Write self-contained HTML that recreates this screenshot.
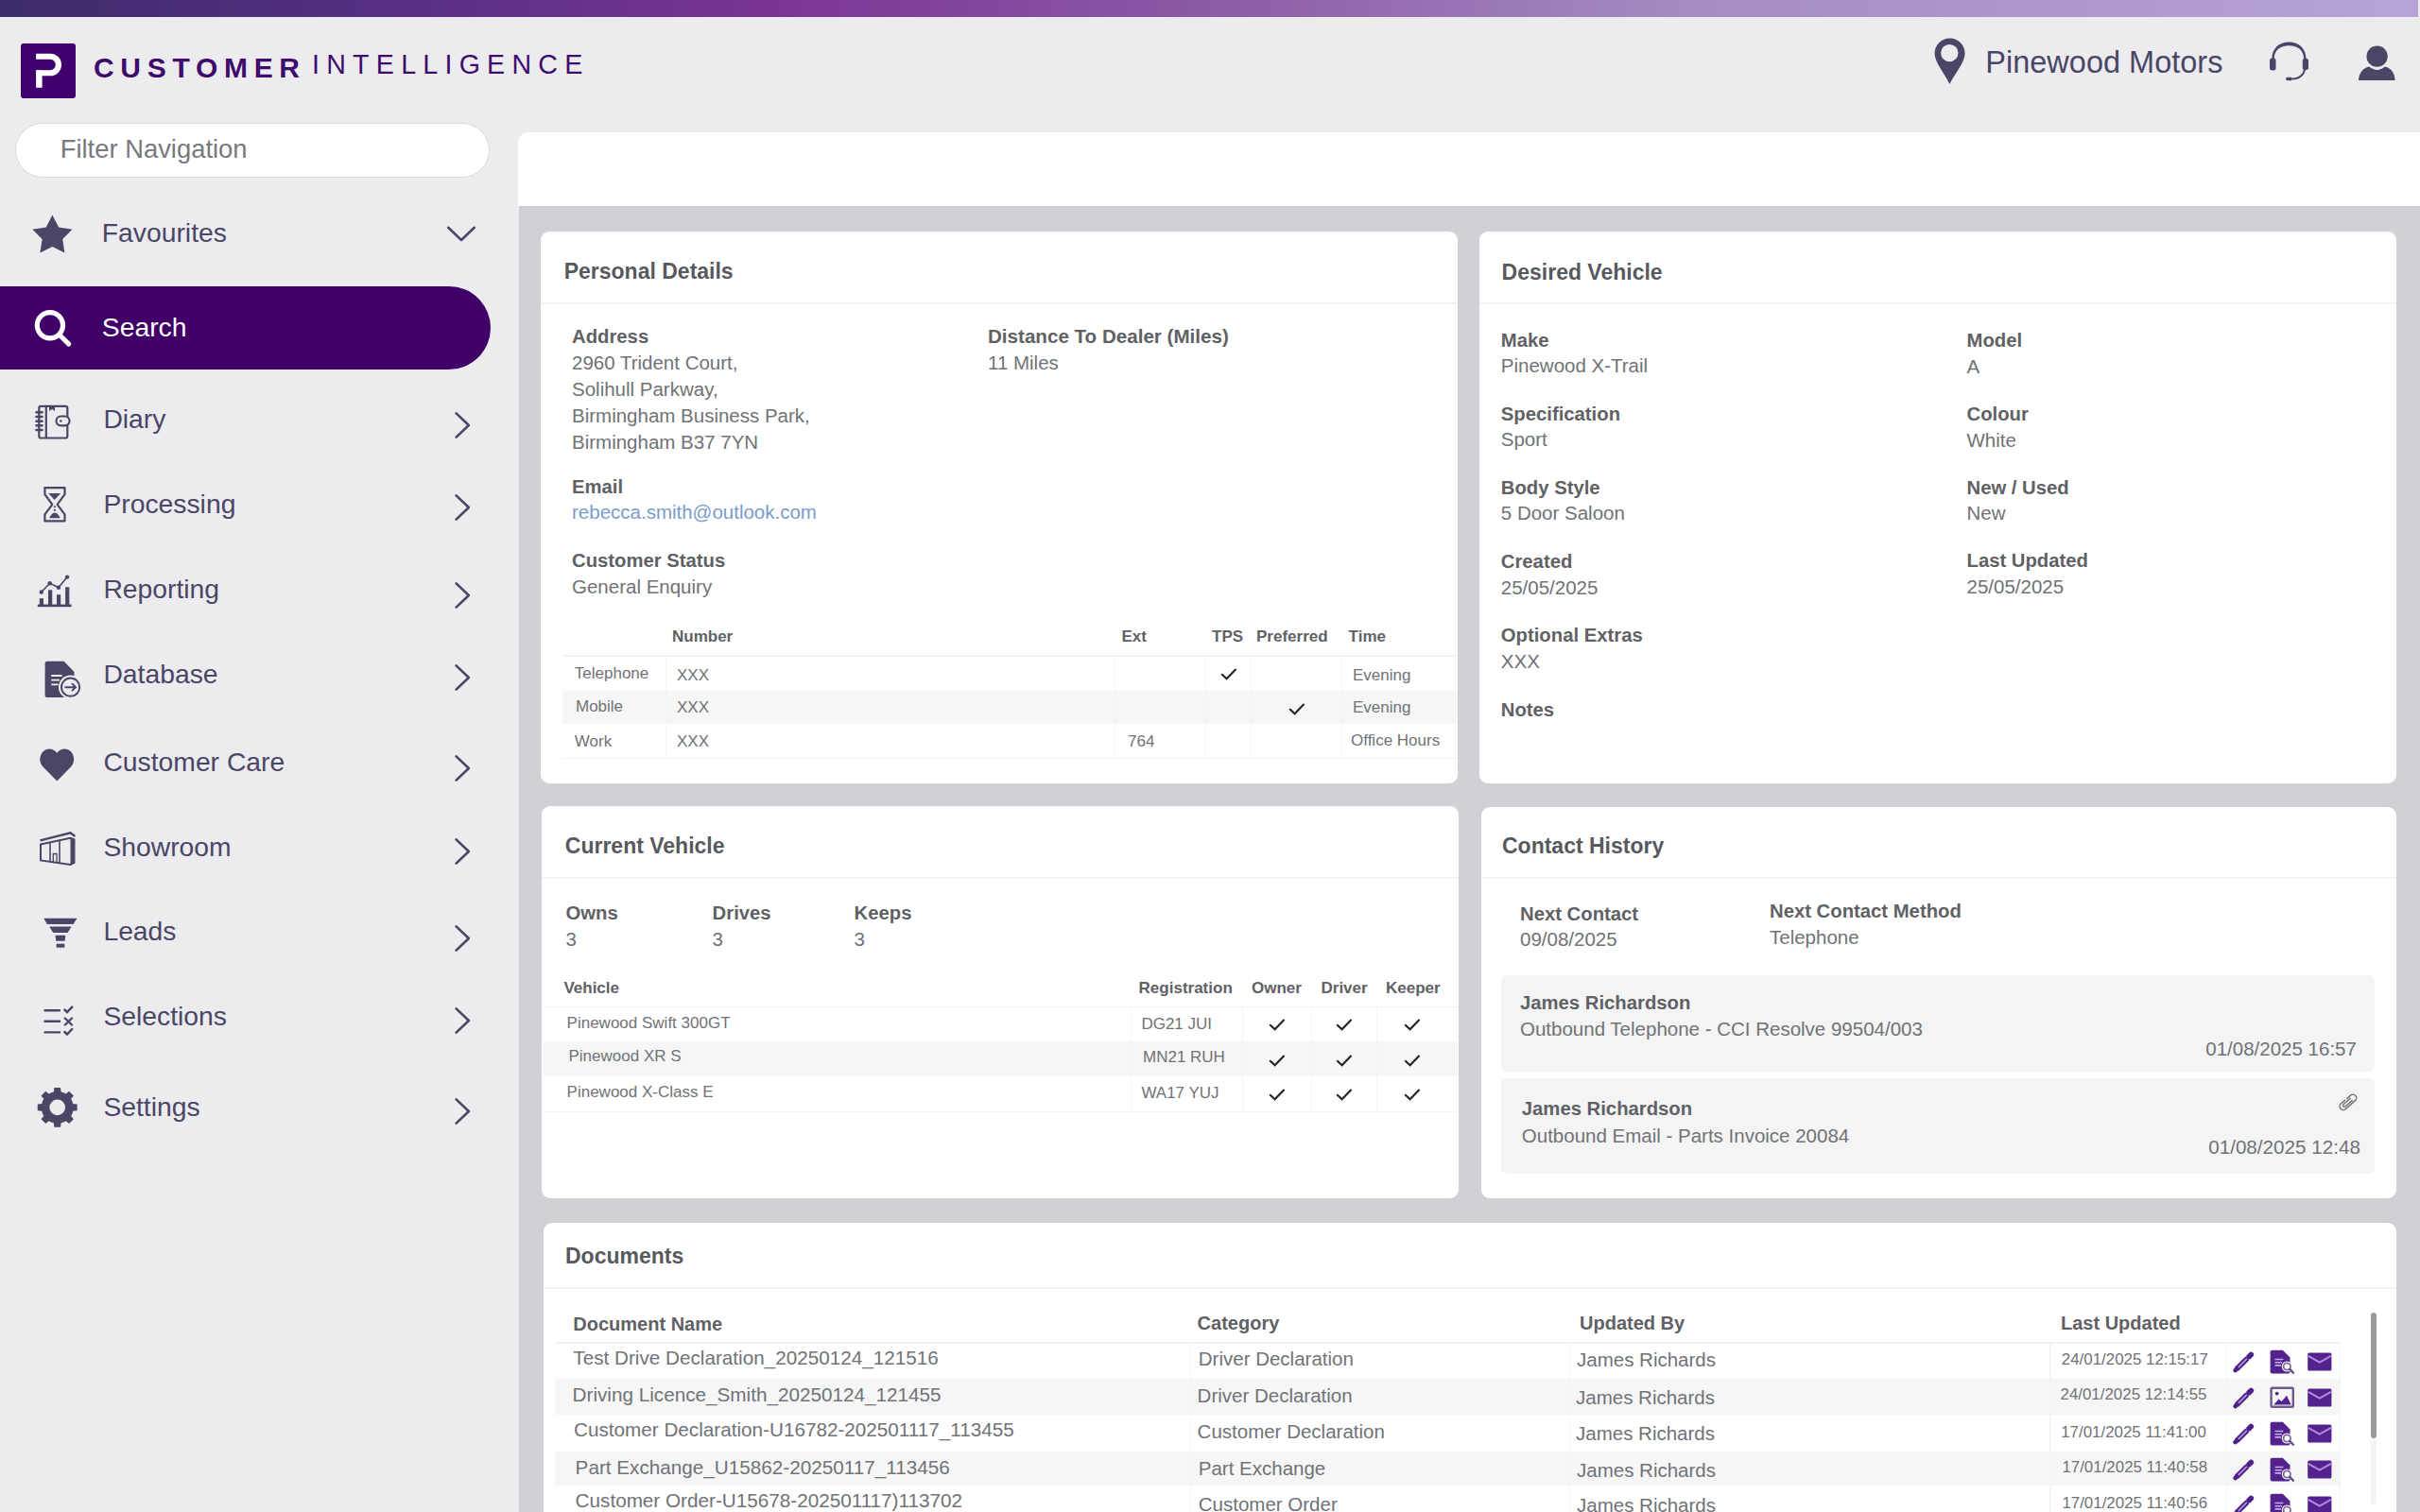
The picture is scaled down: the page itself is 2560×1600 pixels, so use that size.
<!DOCTYPE html>
<html><head><meta charset="utf-8"><style>
html,body{margin:0;padding:0;width:2560px;height:1600px;overflow:hidden;background:#ececef;font-family:"Liberation Sans",sans-serif;}
.t{position:absolute;white-space:nowrap;line-height:1;}
svg{overflow:visible}
</style></head><body>
<div style="position:absolute;left:0px;top:0px;width:2558px;height:18px;background:linear-gradient(90deg,#3c2c6a 0%,#5a2f86 18%,#7a3594 32%,#8c5aa6 50%,#a58cc2 70%,#b6a4d6 100%)"></div>
<svg style="position:absolute;left:22px;top:46px" width="58" height="58" viewBox="0 0 58 58"><rect x="0" y="0" width="58" height="58" rx="3" fill="#40006e"/><rect x="16.1" y="28.5" width="6.5" height="18.3" fill="#fff"/><path d="M16.1,13.75 H31.15 A8.75,8.75 0 0 1 31.15,31.25 H16.1" fill="none" stroke="#fff" stroke-width="6.2"/></svg>
<div class="t" style="left:99.0px;top:57.3px;font-size:30px;font-weight:700;color:#3f0b6d;letter-spacing:6.7px">CUSTOMER</div>
<div class="t" style="left:330.0px;top:54.2px;font-size:28.6px;font-weight:400;color:#3f0b6d;letter-spacing:7.25px">INTELLIGENCE</div>
<svg style="position:absolute;left:2046px;top:40px" width="34" height="50" viewBox="0 0 34 50"><path d="M16.6,0.6 C7.7,0.6 0.6,7.7 0.6,16.6 C0.6,26 11,38 16.4,49 C22,38 32.6,26 32.6,16.6 C32.6,7.7 25.5,0.6 16.6,0.6 Z M16.3,6.9 A9.2,9.2 0 1 1 16.3,25.3 A9.2,9.2 0 1 1 16.3,6.9 Z" fill="#4a4666" fill-rule="evenodd"/></svg>
<div class="t" style="left:2100.3px;top:49.5px;font-size:32.5px;font-weight:400;color:#4a4666;">Pinewood Motors</div>
<svg style="position:absolute;left:2398px;top:42px" width="48" height="46" viewBox="0 0 48 46"><path d="M5.3,20.5 C5.3,9.5 12.8,2.6 23.4,2.6 C34,2.6 41.5,9.5 41.5,20.5 L39.1,20.5 C39.1,11 32.5,6.3 23.4,6.3 C14.3,6.3 7.7,11 7.7,20.5 Z" fill="#4a4666"/><rect x="3" y="19.6" width="6.5" height="13" rx="2.5" fill="#4a4666"/><rect x="37.8" y="19.8" width="6.2" height="12.2" rx="2.5" fill="#4a4666"/><path d="M40,31 C39.5,37 34,41.5 27,41.5" fill="none" stroke="#4a4666" stroke-width="2"/><rect x="20" y="39.7" width="7" height="3.6" rx="1.8" fill="#4a4666"/></svg>
<svg style="position:absolute;left:2494px;top:48px" width="42" height="40" viewBox="0 0 42 40"><circle cx="20.6" cy="11.7" r="11.1" fill="#4a4666"/><path d="M1,37 C1.5,29 6,24 12,22.6 C15,25 18,26 20.6,26 C23.5,26 26,25 29,22.6 C35,24 39.5,29 39.5,37 Z" fill="#4a4666"/></svg>
<div style="position:absolute;left:16px;top:130px;width:502px;height:58px;background:#fff;border:1px solid #d8d8dc;border-radius:29px;box-sizing:border-box"></div>
<div class="t" style="left:63.7px;top:143.6px;font-size:27.4px;font-weight:400;color:#78797c;">Filter Navigation</div>
<div style="position:absolute;left:0px;top:303px;width:518.5px;height:88px;background:#400068;border-radius:0 44px 44px 0"></div>
<div class="t" style="left:107.8px;top:232.4px;font-size:28.3px;font-weight:400;color:#4a4666;">Favourites</div>
<svg style="position:absolute;left:470px;top:236px" width="36" height="22" viewBox="0 0 36 22"><path d="M4.2,4.8 L18,18 L31.8,4.8" fill="none" stroke="#4a4666" stroke-width="2.6" stroke-linecap="round" stroke-linejoin="round"/></svg>
<div class="t" style="left:107.8px;top:332.4px;font-size:28.3px;font-weight:400;color:#fff;">Search</div>
<div class="t" style="left:109.4px;top:429.4px;font-size:28.3px;font-weight:400;color:#4a4666;">Diary</div>
<svg style="position:absolute;left:478px;top:434px" width="22" height="32" viewBox="0 0 22 32"><path d="M4.6,3.4 L17.9,16 L4.6,28.6" fill="none" stroke="#4a4666" stroke-width="2.6" stroke-linecap="round" stroke-linejoin="round"/></svg>
<div class="t" style="left:109.4px;top:519.4px;font-size:28.3px;font-weight:400;color:#4a4666;">Processing</div>
<svg style="position:absolute;left:478px;top:521px" width="22" height="32" viewBox="0 0 22 32"><path d="M4.6,3.4 L17.9,16 L4.6,28.6" fill="none" stroke="#4a4666" stroke-width="2.6" stroke-linecap="round" stroke-linejoin="round"/></svg>
<div class="t" style="left:109.4px;top:609.4px;font-size:28.3px;font-weight:400;color:#4a4666;">Reporting</div>
<svg style="position:absolute;left:478px;top:614px" width="22" height="32" viewBox="0 0 22 32"><path d="M4.6,3.4 L17.9,16 L4.6,28.6" fill="none" stroke="#4a4666" stroke-width="2.6" stroke-linecap="round" stroke-linejoin="round"/></svg>
<div class="t" style="left:109.4px;top:698.8px;font-size:28.3px;font-weight:400;color:#4a4666;">Database</div>
<svg style="position:absolute;left:478px;top:701px" width="22" height="32" viewBox="0 0 22 32"><path d="M4.6,3.4 L17.9,16 L4.6,28.6" fill="none" stroke="#4a4666" stroke-width="2.6" stroke-linecap="round" stroke-linejoin="round"/></svg>
<div class="t" style="left:109.4px;top:792.4px;font-size:28.3px;font-weight:400;color:#4a4666;">Customer Care</div>
<svg style="position:absolute;left:478px;top:797px" width="22" height="32" viewBox="0 0 22 32"><path d="M4.6,3.4 L17.9,16 L4.6,28.6" fill="none" stroke="#4a4666" stroke-width="2.6" stroke-linecap="round" stroke-linejoin="round"/></svg>
<div class="t" style="left:109.4px;top:882.4px;font-size:28.3px;font-weight:400;color:#4a4666;">Showroom</div>
<svg style="position:absolute;left:478px;top:884.5px" width="22" height="32" viewBox="0 0 22 32"><path d="M4.6,3.4 L17.9,16 L4.6,28.6" fill="none" stroke="#4a4666" stroke-width="2.6" stroke-linecap="round" stroke-linejoin="round"/></svg>
<div class="t" style="left:109.4px;top:971.4px;font-size:28.3px;font-weight:400;color:#4a4666;">Leads</div>
<svg style="position:absolute;left:478px;top:976.8px" width="22" height="32" viewBox="0 0 22 32"><path d="M4.6,3.4 L17.9,16 L4.6,28.6" fill="none" stroke="#4a4666" stroke-width="2.6" stroke-linecap="round" stroke-linejoin="round"/></svg>
<div class="t" style="left:109.4px;top:1061.4px;font-size:28.3px;font-weight:400;color:#4a4666;">Selections</div>
<svg style="position:absolute;left:478px;top:1064px" width="22" height="32" viewBox="0 0 22 32"><path d="M4.6,3.4 L17.9,16 L4.6,28.6" fill="none" stroke="#4a4666" stroke-width="2.6" stroke-linecap="round" stroke-linejoin="round"/></svg>
<div class="t" style="left:109.4px;top:1157.4px;font-size:28.3px;font-weight:400;color:#4a4666;">Settings</div>
<svg style="position:absolute;left:478px;top:1160px" width="22" height="32" viewBox="0 0 22 32"><path d="M4.6,3.4 L17.9,16 L4.6,28.6" fill="none" stroke="#4a4666" stroke-width="2.6" stroke-linecap="round" stroke-linejoin="round"/></svg>
<svg style="position:absolute;left:0px;top:200px" width="100" height="100" viewBox="0 200 100 100"><polygon points="55.40,227.50 62.10,240.38 76.42,242.77 66.24,253.12 68.39,267.48 55.40,261.00 42.41,267.48 44.56,253.12 34.38,242.77 48.70,240.38" fill="#4a4666"/></svg>
<svg style="position:absolute;left:0px;top:300px" width="100" height="100" viewBox="0 300 100 100"><circle cx="52.9" cy="344.2" r="13.6" fill="none" stroke="#fff" stroke-width="5.2"/><path d="M63,354.5 L72.8,364.1" stroke="#fff" stroke-width="5" stroke-linecap="round"/></svg>
<svg style="position:absolute;left:0px;top:400px" width="100" height="100" viewBox="0 400 100 100"><g fill="none" stroke="#4a4666" stroke-width="2.2"><rect x="41.3" y="429.9" width="30" height="33.6" rx="2"/><path d="M48.8,430 V463.5"/><path d="M38.4,436.3 H44.6 M38.4,441 H44.6 M38.4,445.7 H44.6 M38.4,450.3 H44.6 M38.4,455 H44.6" stroke-width="2.4" stroke-linecap="round"/><rect x="59.5" y="440.5" width="14" height="9.8" rx="4.9" fill="#ececef"/></g><circle cx="64.3" cy="445.5" r="1.3" fill="#4a4666"/><path d="M52,430 H58 V435 L55,433 L52,435 Z" fill="#4a4666"/></svg>
<svg style="position:absolute;left:0px;top:500px" width="100" height="100" viewBox="0 500 100 100"><path d="M47.4,516.1 H68.5 V523.2 L60.6,533.8 L68.5,544.4 V551.3 H47.4 V544.4 L55.3,533.8 L47.4,523.2 Z" fill="none" stroke="#4a4666" stroke-width="2.2" stroke-linejoin="round"/><path d="M51.2,522 H64.1 L57.7,529 Z" fill="#4a4666"/><path d="M52.2,548.3 C53.5,545 55.5,542.5 57.9,542.5 C60.3,542.5 62.4,545 63.7,548.3 Z" fill="#4a4666"/><circle cx="57.9" cy="536.3" r="1.1" fill="#4a4666"/><circle cx="57.9" cy="539.8" r="1.1" fill="#4a4666"/></svg>
<svg style="position:absolute;left:0px;top:600px" width="100" height="100" viewBox="0 600 100 100"><g fill="#4a4666"><rect x="39.8" y="639.6" width="35.8" height="2.6"/><rect x="41.8" y="633.2" width="4.2" height="7"/><rect x="51" y="624.3" width="4.2" height="16"/><rect x="60" y="629.2" width="4.2" height="11"/><rect x="69.1" y="621.3" width="4.2" height="19"/><circle cx="43.8" cy="626.5" r="2.2"/><circle cx="52.7" cy="617.3" r="2.2"/><circle cx="61.9" cy="621.8" r="2.2"/><circle cx="71.1" cy="610.6" r="2.2"/></g><path d="M43.8,626.5 L52.7,617.3 L61.9,621.8 L71.1,610.6" fill="none" stroke="#4a4666" stroke-width="1.6"/></svg>
<svg style="position:absolute;left:0px;top:690px" width="100" height="60" viewBox="0 690 100 60"><path d="M49.6,699.7 H67.6 L78.5,711 V736 C78.5,737 77.5,738 76.5,738 H49.6 C48.6,738 47.6,737 47.6,736 V701.7 C47.6,700.7 48.6,699.7 49.6,699.7 Z" fill="#4a4666"/><circle cx="74.6" cy="727.2" r="12.6" fill="#ececef"/><circle cx="74.6" cy="727.2" r="9.6" fill="none" stroke="#4a4666" stroke-width="2"/><path d="M68.5,727.2 H80 M76,723.2 L80,727.2 L76,731.2" fill="none" stroke="#4a4666" stroke-width="1.9"/><path d="M54.2,715 H65.6 M54.2,719.6 H63 M54.2,724.4 H61.5" stroke="#ececef" stroke-width="1.9"/></svg>
<svg style="position:absolute;left:0px;top:780px" width="100" height="60" viewBox="0 780 100 60"><path d="M60.3,826.6 L45.5,811.5 C40.5,806.5 41.5,797 48,793.5 C53,791 57.5,793 60.3,796.8 C63,793 67.5,791 72.5,793.5 C79,797 80,806.5 75,811.5 Z" fill="#4a4666"/></svg>
<svg style="position:absolute;left:0px;top:870px" width="100" height="60" viewBox="0 870 100 60"><g fill="none" stroke="#4a4666"><path d="M42.5,889.3 L74.6,881.3 L79.3,885" stroke-width="2.4"/><path d="M43,893.5 L74.5,886.8 L78.5,888.5 V913 L74.5,915 L43,910.5 Z" stroke-width="2"/><path d="M53,891.5 V912 M63,889.5 V913.5" stroke-width="1.6"/><path d="M56.3,912.5 V903.5 H60 V913" stroke-width="1.3"/></g><path d="M74.5,886.8 L78.5,888.5 V913 L74.5,915 Z" fill="#4a4666"/></svg>
<svg style="position:absolute;left:0px;top:960px" width="100" height="60" viewBox="0 960 100 60"><g fill="#4a4666"><path d="M46.3,971.7 H81.5 L77.5,977.9 H49.8 Z"/><path d="M52.2,980.6 H75.6 L71.6,987 H56.2 Z"/><path d="M58.5,989.8 H69.3 L68.6,995.7 H59.2 Z"/><rect x="59.7" y="998.7" width="8.6" height="4"/></g></svg>
<svg style="position:absolute;left:0px;top:1055px" width="100" height="50" viewBox="0 1055 100 50"><g fill="none" stroke="#4a4666" stroke-width="2.4" stroke-linecap="round"><path d="M47.5,1069.2 H63 M47.5,1080.8 H63 M47.5,1092.4 H63"/><path d="M68.3,1068.5 L71,1071 L76.3,1065.6 M68.3,1092 L71,1094.5 L76.3,1089"/><path d="M68.8,1077.5 L76,1084.5 M76,1077.5 L68.8,1084.5"/></g></svg>
<svg style="position:absolute;left:0px;top:1140px" width="100" height="60" viewBox="0 1140 100 60"><polygon points="76.44,1168.05 81.63,1168.52 81.63,1175.28 76.44,1175.75 74.55,1180.30 77.89,1184.31 73.11,1189.09 69.10,1185.75 64.55,1187.64 64.08,1192.83 57.32,1192.83 56.85,1187.64 52.30,1185.75 48.29,1189.09 43.51,1184.31 46.85,1180.30 44.96,1175.75 39.77,1175.28 39.77,1168.52 44.96,1168.05 46.85,1163.50 43.51,1159.49 48.29,1154.71 52.30,1158.05 56.85,1156.16 57.32,1150.97 64.08,1150.97 64.55,1156.16 69.10,1158.05 73.11,1154.71 77.89,1159.49 74.55,1163.50" fill="#4a4666"/><circle cx="60.7" cy="1171.9" r="17" fill="#4a4666"/><circle cx="60.7" cy="1171.9" r="8.3" fill="#ececef"/></svg>
<div style="position:absolute;left:548px;top:140px;width:2012px;height:78px;background:#fff;border-top-left-radius:11px"></div>
<div style="position:absolute;left:549px;top:218px;width:2011px;height:1382px;background:#d1d0d5"></div>
<div style="position:absolute;left:549px;top:218.6px;width:2011px;height:1.6px;background:#c9c8cd"></div>
<div style="position:absolute;left:572px;top:245px;width:970px;height:584px;background:#fff;border-radius:9px"></div>
<div class="t" style="left:596.7px;top:275.5px;font-size:23px;font-weight:700;color:#57595e;">Personal Details</div>
<div style="position:absolute;left:572px;top:319.6px;width:970px;height:2px;background:#f3f3f4"></div>
<div class="t" style="left:605.0px;top:345.8px;font-size:20.3px;font-weight:700;color:#5f6165;">Address</div>
<div class="t" style="left:605.0px;top:374.0px;font-size:20.5px;font-weight:400;color:#707276;">2960 Trident Court,</div>
<div class="t" style="left:605.0px;top:402.1px;font-size:20.5px;font-weight:400;color:#707276;">Solihull Parkway,</div>
<div class="t" style="left:605.0px;top:430.2px;font-size:20.5px;font-weight:400;color:#707276;">Birmingham Business Park,</div>
<div class="t" style="left:605.0px;top:458.3px;font-size:20.5px;font-weight:400;color:#707276;">Birmingham B37 7YN</div>
<div class="t" style="left:1045.0px;top:345.6px;font-size:20.6px;font-weight:700;color:#5f6165;">Distance To Dealer (Miles)</div>
<div class="t" style="left:1045.0px;top:374.0px;font-size:20.5px;font-weight:400;color:#707276;">11 Miles</div>
<div class="t" style="left:605.0px;top:504.6px;font-size:20.3px;font-weight:700;color:#5f6165;">Email</div>
<div class="t" style="left:605.0px;top:532.4px;font-size:20.5px;font-weight:400;color:#7a9ccb;">rebecca.smith@outlook.com</div>
<div class="t" style="left:605.0px;top:582.8px;font-size:20.3px;font-weight:700;color:#5f6165;">Customer Status</div>
<div class="t" style="left:605.0px;top:610.6px;font-size:20.5px;font-weight:400;color:#707276;">General Enquiry</div>
<div class="t" style="left:711.0px;top:665.0px;font-size:17px;font-weight:700;color:#5f6165;">Number</div>
<div class="t" style="left:1186.5px;top:665.1px;font-size:17px;font-weight:700;color:#5f6165;">Ext</div>
<div class="t" style="left:1282.0px;top:665.1px;font-size:17px;font-weight:700;color:#5f6165;">TPS</div>
<div class="t" style="left:1329.0px;top:665.1px;font-size:17px;font-weight:700;color:#5f6165;">Preferred</div>
<div class="t" style="left:1426.6px;top:665.1px;font-size:17px;font-weight:700;color:#5f6165;">Time</div>
<div style="position:absolute;left:595px;top:693px;width:947px;height:1.5px;background:#f2f2f2"></div>
<div style="position:absolute;left:595px;top:730.5px;width:947px;height:35.5px;background:#f6f6f6"></div>
<div style="position:absolute;left:595px;top:801.5px;width:947px;height:1.5px;background:#f2f2f2"></div>
<div style="position:absolute;left:704px;top:694px;width:1.3px;height:108px;background:#f4f4f4"></div>
<div style="position:absolute;left:1179px;top:694px;width:1.3px;height:108px;background:#f4f4f4"></div>
<div style="position:absolute;left:1275px;top:694px;width:1.3px;height:108px;background:#f4f4f4"></div>
<div style="position:absolute;left:1323px;top:694px;width:1.3px;height:108px;background:#f4f4f4"></div>
<div style="position:absolute;left:1418.5px;top:694px;width:1.3px;height:108px;background:#f4f4f4"></div>
<div class="t" style="left:607.8px;top:703.6px;font-size:17px;font-weight:400;color:#707276;">Telephone</div>
<div class="t" style="left:716.0px;top:705.6px;font-size:17px;font-weight:400;color:#707276;">XXX</div>
<svg style="position:absolute;left:1290.5px;top:706px" width="18" height="15" viewBox="0 0 18 15"><path d="M1.8,7.8 L6.6,12.3 L16,2.6" fill="none" stroke="#222" stroke-width="2.1" stroke-linecap="round"/></svg>
<div class="t" style="left:1431.0px;top:705.6px;font-size:17px;font-weight:400;color:#707276;">Evening</div>
<div class="t" style="left:609.0px;top:738.6px;font-size:17px;font-weight:400;color:#707276;">Mobile</div>
<div class="t" style="left:716.0px;top:740.1px;font-size:17px;font-weight:400;color:#707276;">XXX</div>
<svg style="position:absolute;left:1362.5px;top:742.5px" width="18" height="15" viewBox="0 0 18 15"><path d="M1.8,7.8 L6.6,12.3 L16,2.6" fill="none" stroke="#222" stroke-width="2.1" stroke-linecap="round"/></svg>
<div class="t" style="left:1431.0px;top:739.6px;font-size:17px;font-weight:400;color:#707276;">Evening</div>
<div class="t" style="left:607.8px;top:776.1px;font-size:17px;font-weight:400;color:#707276;">Work</div>
<div class="t" style="left:716.0px;top:776.1px;font-size:17px;font-weight:400;color:#707276;">XXX</div>
<div class="t" style="left:1193.0px;top:775.6px;font-size:17px;font-weight:400;color:#707276;">764</div>
<div class="t" style="left:1429.0px;top:774.6px;font-size:17px;font-weight:400;color:#707276;">Office Hours</div>
<div style="position:absolute;left:1565px;top:245px;width:970px;height:584px;background:#fff;border-radius:9px"></div>
<div class="t" style="left:1588.6px;top:276.5px;font-size:23px;font-weight:700;color:#57595e;">Desired Vehicle</div>
<div style="position:absolute;left:1565px;top:320.4px;width:970px;height:2px;background:#f3f3f4"></div>
<div class="t" style="left:1587.8px;top:349.6px;font-size:20.3px;font-weight:700;color:#5f6165;">Make</div>
<div class="t" style="left:1587.8px;top:377.0px;font-size:20.5px;font-weight:400;color:#707276;">Pinewood X-Trail</div>
<div class="t" style="left:1587.8px;top:427.8px;font-size:20.3px;font-weight:700;color:#5f6165;">Specification</div>
<div class="t" style="left:1587.8px;top:455.2px;font-size:20.5px;font-weight:400;color:#707276;">Sport</div>
<div class="t" style="left:1587.8px;top:506.0px;font-size:20.3px;font-weight:700;color:#5f6165;">Body Style</div>
<div class="t" style="left:1587.8px;top:533.4px;font-size:20.5px;font-weight:400;color:#707276;">5 Door Saloon</div>
<div class="t" style="left:1587.8px;top:584.2px;font-size:20.3px;font-weight:700;color:#5f6165;">Created</div>
<div class="t" style="left:1587.8px;top:611.6px;font-size:20.5px;font-weight:400;color:#707276;">25/05/2025</div>
<div class="t" style="left:1587.8px;top:662.4px;font-size:20.3px;font-weight:700;color:#5f6165;">Optional Extras</div>
<div class="t" style="left:1587.8px;top:689.8px;font-size:20.5px;font-weight:400;color:#707276;">XXX</div>
<div class="t" style="left:1587.8px;top:740.6px;font-size:20.3px;font-weight:700;color:#5f6165;">Notes</div>
<div class="t" style="left:2080.5px;top:350.3px;font-size:20.3px;font-weight:700;color:#5f6165;">Model</div>
<div class="t" style="left:2080.5px;top:377.9px;font-size:20.5px;font-weight:400;color:#707276;">A</div>
<div class="t" style="left:2080.5px;top:428.0px;font-size:20.3px;font-weight:700;color:#5f6165;">Colour</div>
<div class="t" style="left:2080.5px;top:455.6px;font-size:20.5px;font-weight:400;color:#707276;">White</div>
<div class="t" style="left:2080.5px;top:505.7px;font-size:20.3px;font-weight:700;color:#5f6165;">New / Used</div>
<div class="t" style="left:2080.5px;top:533.3px;font-size:20.5px;font-weight:400;color:#707276;">New</div>
<div class="t" style="left:2080.5px;top:583.4px;font-size:20.3px;font-weight:700;color:#5f6165;">Last Updated</div>
<div class="t" style="left:2080.5px;top:611.0px;font-size:20.5px;font-weight:400;color:#707276;">25/05/2025</div>
<div style="position:absolute;left:573px;top:853px;width:969.5px;height:414.5px;background:#fff;border-radius:9px"></div>
<div class="t" style="left:597.8px;top:883.5px;font-size:23px;font-weight:700;color:#57595e;">Current Vehicle</div>
<div style="position:absolute;left:573px;top:927.8px;width:969.5px;height:2px;background:#f3f3f4"></div>
<div class="t" style="left:598.5px;top:956.4px;font-size:20.3px;font-weight:700;color:#5f6165;">Owns</div>
<div class="t" style="left:598.5px;top:983.6px;font-size:20.5px;font-weight:400;color:#707276;">3</div>
<div class="t" style="left:753.6px;top:956.4px;font-size:20.3px;font-weight:700;color:#5f6165;">Drives</div>
<div class="t" style="left:753.6px;top:983.6px;font-size:20.5px;font-weight:400;color:#707276;">3</div>
<div class="t" style="left:903.6px;top:956.4px;font-size:20.3px;font-weight:700;color:#5f6165;">Keeps</div>
<div class="t" style="left:903.6px;top:983.6px;font-size:20.5px;font-weight:400;color:#707276;">3</div>
<div class="t" style="left:596.4px;top:1036.6px;font-size:17px;font-weight:700;color:#5f6165;">Vehicle</div>
<div class="t" style="left:1204.6px;top:1036.5px;font-size:17px;font-weight:700;color:#5f6165;">Registration</div>
<div class="t" style="left:1324.0px;top:1036.5px;font-size:17px;font-weight:700;color:#5f6165;">Owner</div>
<div class="t" style="left:1397.5px;top:1036.5px;font-size:17px;font-weight:700;color:#5f6165;">Driver</div>
<div class="t" style="left:1466.0px;top:1036.5px;font-size:17px;font-weight:700;color:#5f6165;">Keeper</div>
<div style="position:absolute;left:575px;top:1064.5px;width:967px;height:1.5px;background:#f2f2f2"></div>
<div style="position:absolute;left:575px;top:1102px;width:967px;height:36.5px;background:#f6f6f6"></div>
<div style="position:absolute;left:575px;top:1175.8px;width:967px;height:1.5px;background:#f3f3f3"></div>
<div style="position:absolute;left:1196px;top:1065px;width:1.3px;height:111px;background:#f4f4f4"></div>
<div style="position:absolute;left:1314px;top:1065px;width:1.3px;height:111px;background:#f4f4f4"></div>
<div style="position:absolute;left:1387px;top:1065px;width:1.3px;height:111px;background:#f4f4f4"></div>
<div style="position:absolute;left:1455.5px;top:1065px;width:1.3px;height:111px;background:#f4f4f4"></div>
<div class="t" style="left:599.6px;top:1074.1px;font-size:17px;font-weight:400;color:#707276;">Pinewood Swift 300GT</div>
<div class="t" style="left:1207.4px;top:1074.6px;font-size:17px;font-weight:400;color:#707276;">DG21 JUI</div>
<svg style="position:absolute;left:1342px;top:1077px" width="18" height="15" viewBox="0 0 18 15"><path d="M1.8,7.8 L6.6,12.3 L16,2.6" fill="none" stroke="#222" stroke-width="2.1" stroke-linecap="round"/></svg>
<svg style="position:absolute;left:1412.5px;top:1077px" width="18" height="15" viewBox="0 0 18 15"><path d="M1.8,7.8 L6.6,12.3 L16,2.6" fill="none" stroke="#222" stroke-width="2.1" stroke-linecap="round"/></svg>
<svg style="position:absolute;left:1484.5px;top:1077px" width="18" height="15" viewBox="0 0 18 15"><path d="M1.8,7.8 L6.6,12.3 L16,2.6" fill="none" stroke="#222" stroke-width="2.1" stroke-linecap="round"/></svg>
<div class="t" style="left:601.5px;top:1109.1px;font-size:17px;font-weight:400;color:#707276;">Pinewood XR S</div>
<div class="t" style="left:1209.0px;top:1109.6px;font-size:17px;font-weight:400;color:#707276;">MN21 RUH</div>
<svg style="position:absolute;left:1342px;top:1114.5px" width="18" height="15" viewBox="0 0 18 15"><path d="M1.8,7.8 L6.6,12.3 L16,2.6" fill="none" stroke="#222" stroke-width="2.1" stroke-linecap="round"/></svg>
<svg style="position:absolute;left:1412.5px;top:1114.5px" width="18" height="15" viewBox="0 0 18 15"><path d="M1.8,7.8 L6.6,12.3 L16,2.6" fill="none" stroke="#222" stroke-width="2.1" stroke-linecap="round"/></svg>
<svg style="position:absolute;left:1484.5px;top:1114.5px" width="18" height="15" viewBox="0 0 18 15"><path d="M1.8,7.8 L6.6,12.3 L16,2.6" fill="none" stroke="#222" stroke-width="2.1" stroke-linecap="round"/></svg>
<div class="t" style="left:599.6px;top:1147.1px;font-size:17px;font-weight:400;color:#707276;">Pinewood X-Class E</div>
<div class="t" style="left:1207.4px;top:1147.6px;font-size:17px;font-weight:400;color:#707276;">WA17 YUJ</div>
<svg style="position:absolute;left:1342px;top:1150.5px" width="18" height="15" viewBox="0 0 18 15"><path d="M1.8,7.8 L6.6,12.3 L16,2.6" fill="none" stroke="#222" stroke-width="2.1" stroke-linecap="round"/></svg>
<svg style="position:absolute;left:1412.5px;top:1150.5px" width="18" height="15" viewBox="0 0 18 15"><path d="M1.8,7.8 L6.6,12.3 L16,2.6" fill="none" stroke="#222" stroke-width="2.1" stroke-linecap="round"/></svg>
<svg style="position:absolute;left:1484.5px;top:1150.5px" width="18" height="15" viewBox="0 0 18 15"><path d="M1.8,7.8 L6.6,12.3 L16,2.6" fill="none" stroke="#222" stroke-width="2.1" stroke-linecap="round"/></svg>
<div style="position:absolute;left:1566.5px;top:853.5px;width:968.5px;height:414.0px;background:#fff;border-radius:9px"></div>
<div class="t" style="left:1589.0px;top:883.8px;font-size:23px;font-weight:700;color:#57595e;">Contact History</div>
<div style="position:absolute;left:1566.5px;top:928px;width:968.5px;height:2px;background:#f3f3f4"></div>
<div class="t" style="left:1608.0px;top:956.8px;font-size:20.3px;font-weight:700;color:#5f6165;">Next Contact</div>
<div class="t" style="left:1608.0px;top:984.3px;font-size:20.5px;font-weight:400;color:#707276;">09/08/2025</div>
<div class="t" style="left:1872.0px;top:954.4px;font-size:20.3px;font-weight:700;color:#5f6165;">Next Contact Method</div>
<div class="t" style="left:1872.0px;top:982.0px;font-size:20.5px;font-weight:400;color:#707276;">Telephone</div>
<div style="position:absolute;left:1588px;top:1032.3px;width:924px;height:101.7px;background:#f4f4f5;border-radius:6px"></div>
<div style="position:absolute;left:1588px;top:1140.7px;width:924px;height:101.3px;background:#f4f4f5;border-radius:6px"></div>
<div class="t" style="left:1608.0px;top:1050.8px;font-size:20.3px;font-weight:700;color:#5f6165;">James Richardson</div>
<div class="t" style="left:1608.0px;top:1079.2px;font-size:20.5px;font-weight:400;color:#707276;">Outbound Telephone - CCI Resolve 99504/003</div>
<div class="t" style="left:2333.3px;top:1099.6px;font-size:20.5px;font-weight:400;color:#707276;">01/08/2025 16:57</div>
<div class="t" style="left:1609.8px;top:1163.2px;font-size:20.3px;font-weight:700;color:#5f6165;">James Richardson</div>
<div class="t" style="left:1609.8px;top:1191.6px;font-size:20.5px;font-weight:400;color:#707276;">Outbound Email - Parts Invoice 20084</div>
<div class="t" style="left:2336.2px;top:1204.0px;font-size:20.65px;font-weight:400;color:#707276;">01/08/2025 12:48</div>
<svg style="position:absolute;left:2464px;top:1150px" width="40" height="32" viewBox="-20 -16 40 32"><g transform="translate(0,0.2) rotate(-41)" fill="none" stroke="#74767e" stroke-width="1.5" stroke-linecap="round"><path d="M1.5,-3.7 H6.6 A3.7,3.7 0 0 1 6.6,3.7 H-7 A3.7,3.7 0 0 1 -7,-3.7 H-1.5"/><path d="M4.2,-1.5 H-5.2 A1.5,1.5 0 0 0 -5.2,1.5 H4.2"/></g></svg>
<div style="position:absolute;left:575px;top:1294px;width:1960px;height:366px;background:#fff;border-radius:9px"></div>
<div class="t" style="left:598.0px;top:1317.5px;font-size:23px;font-weight:700;color:#57595e;">Documents</div>
<div style="position:absolute;left:575px;top:1362px;width:1960px;height:2px;background:#f3f3f4"></div>
<div class="t" style="left:606.3px;top:1390.8px;font-size:20px;font-weight:700;color:#5f6165;">Document Name</div>
<div class="t" style="left:1266.6px;top:1389.7px;font-size:20px;font-weight:700;color:#5f6165;">Category</div>
<div class="t" style="left:1671.0px;top:1389.7px;font-size:20px;font-weight:700;color:#5f6165;">Updated By</div>
<div class="t" style="left:2180.0px;top:1389.6px;font-size:20px;font-weight:700;color:#5f6165;">Last Updated</div>
<div style="position:absolute;left:587px;top:1420px;width:1888px;height:1.5px;background:#f2f2f2"></div>
<div style="position:absolute;left:587px;top:1459px;width:1888px;height:37.8px;background:#f6f6f6"></div>
<div style="position:absolute;left:587px;top:1535.7px;width:1888px;height:36.5px;background:#f6f6f6"></div>
<div style="position:absolute;left:1258.5px;top:1421px;width:1.3px;height:180px;background:#f4f4f4"></div>
<div style="position:absolute;left:1660px;top:1421px;width:1.3px;height:180px;background:#f4f4f4"></div>
<div style="position:absolute;left:2168.4px;top:1421px;width:1.3px;height:180px;background:#f4f4f4"></div>
<div style="position:absolute;left:2354.7px;top:1421px;width:1.3px;height:180px;background:#f4f4f4"></div>
<div style="position:absolute;left:2474.5px;top:1421px;width:1.3px;height:180px;background:#f4f4f4"></div>
<div class="t" style="left:606.3px;top:1426.5px;font-size:20.7px;font-weight:400;color:#707276;">Test Drive Declaration_20250124_121516</div>
<div class="t" style="left:1267.8px;top:1427.8px;font-size:20.5px;font-weight:400;color:#707276;">Driver Declaration</div>
<div class="t" style="left:1668.0px;top:1429.0px;font-size:20.5px;font-weight:400;color:#707276;">James Richards</div>
<div class="t" style="left:2180.8px;top:1430.8px;font-size:16.9px;font-weight:400;color:#707276;">24/01/2025 12:15:17</div>
<svg style="position:absolute;left:2355px;top:1420.0px" width="120" height="38" viewBox="2355 1420 120 38"><path d="M2366,1448.7 L2377.3,1437.4" stroke="#4d2188" stroke-width="5.6"/><path d="M2366.6,1448.1 L2376.8,1437.9" stroke="#b99be3" stroke-width="1.5"/><path d="M2364.6,1450.1 L2366.2,1448.5" stroke="#4d2188" stroke-width="4.6" stroke-linecap="round"/><path d="M2379,1435.7 L2381.3,1433.4" stroke="#4d2188" stroke-width="5.6" stroke-linecap="round"/><path d="M2403.6,1428.7 H2414.8 L2422.5,1436.4 V1451.6 Q2422.5,1453.6 2420.5,1453.6 H2403.6 Q2401.6,1453.6 2401.6,1451.6 V1430.7 Q2401.6,1428.7 2403.6,1428.7 Z" fill="#54228f"/><path d="M2406.6,1438.5 H2415.3 M2406.6,1441.7 H2414 M2406.6,1444.9 H2413" stroke="#c6b0ea" stroke-width="1.6"/><circle cx="2419.3" cy="1446" r="5.6" fill="#fff"/><circle cx="2419.3" cy="1446" r="3.7" fill="#fff" stroke="#7d6a98" stroke-width="1.8"/><path d="M2422.2,1448.9 L2426,1452.7" stroke="#5e4a80" stroke-width="2.3" stroke-linecap="round"/><rect x="2441.2" y="1431.4" width="25.2" height="19" rx="1.5" fill="#54228f"/><path d="M2441.8,1434.8 L2453.8,1441.7 L2465.8,1434.8" fill="none" stroke="#b18be0" stroke-width="2"/></svg>
<div class="t" style="left:605.6px;top:1465.5px;font-size:20.7px;font-weight:400;color:#707276;">Driving Licence_Smith_20250124_121455</div>
<div class="t" style="left:1266.6px;top:1467.2px;font-size:20.5px;font-weight:400;color:#707276;">Driver Declaration</div>
<div class="t" style="left:1667.0px;top:1469.2px;font-size:20.5px;font-weight:400;color:#707276;">James Richards</div>
<div class="t" style="left:2179.5px;top:1468.1px;font-size:16.9px;font-weight:400;color:#707276;">24/01/2025 12:14:55</div>
<svg style="position:absolute;left:2355px;top:1458.0px" width="120" height="38" viewBox="2355 1420 120 38"><path d="M2366,1448.7 L2377.3,1437.4" stroke="#4d2188" stroke-width="5.6"/><path d="M2366.6,1448.1 L2376.8,1437.9" stroke="#b99be3" stroke-width="1.5"/><path d="M2364.6,1450.1 L2366.2,1448.5" stroke="#4d2188" stroke-width="4.6" stroke-linecap="round"/><path d="M2379,1435.7 L2381.3,1433.4" stroke="#4d2188" stroke-width="5.6" stroke-linecap="round"/><rect x="2402.6" y="1430.8" width="23.2" height="20" fill="none" stroke="#6e5c8c" stroke-width="2.4" rx="1"/><circle cx="2408.7" cy="1436.6" r="1.9" fill="#4d2a7a"/><path d="M2405.2,1448.6 L2410.6,1442.4 L2413.6,1445 L2419,1438.7 L2423.6,1448.6 Z" fill="#54228f"/><rect x="2441.2" y="1431.4" width="25.2" height="19" rx="1.5" fill="#54228f"/><path d="M2441.8,1434.8 L2453.8,1441.7 L2465.8,1434.8" fill="none" stroke="#b18be0" stroke-width="2"/></svg>
<div class="t" style="left:607.0px;top:1503.2px;font-size:20.7px;font-weight:400;color:#707276;">Customer Declaration-U16782-202501117_113455</div>
<div class="t" style="left:1266.6px;top:1505.2px;font-size:20.5px;font-weight:400;color:#707276;">Customer Declaration</div>
<div class="t" style="left:1667.0px;top:1507.0px;font-size:20.5px;font-weight:400;color:#707276;">James Richards</div>
<div class="t" style="left:2180.2px;top:1507.8px;font-size:16.9px;font-weight:400;color:#707276;">17/01/2025 11:41:00</div>
<svg style="position:absolute;left:2355px;top:1496.0px" width="120" height="38" viewBox="2355 1420 120 38"><path d="M2366,1448.7 L2377.3,1437.4" stroke="#4d2188" stroke-width="5.6"/><path d="M2366.6,1448.1 L2376.8,1437.9" stroke="#b99be3" stroke-width="1.5"/><path d="M2364.6,1450.1 L2366.2,1448.5" stroke="#4d2188" stroke-width="4.6" stroke-linecap="round"/><path d="M2379,1435.7 L2381.3,1433.4" stroke="#4d2188" stroke-width="5.6" stroke-linecap="round"/><path d="M2403.6,1428.7 H2414.8 L2422.5,1436.4 V1451.6 Q2422.5,1453.6 2420.5,1453.6 H2403.6 Q2401.6,1453.6 2401.6,1451.6 V1430.7 Q2401.6,1428.7 2403.6,1428.7 Z" fill="#54228f"/><path d="M2406.6,1438.5 H2415.3 M2406.6,1441.7 H2414 M2406.6,1444.9 H2413" stroke="#c6b0ea" stroke-width="1.6"/><circle cx="2419.3" cy="1446" r="5.6" fill="#fff"/><circle cx="2419.3" cy="1446" r="3.7" fill="#fff" stroke="#7d6a98" stroke-width="1.8"/><path d="M2422.2,1448.9 L2426,1452.7" stroke="#5e4a80" stroke-width="2.3" stroke-linecap="round"/><rect x="2441.2" y="1431.4" width="25.2" height="19" rx="1.5" fill="#54228f"/><path d="M2441.8,1434.8 L2453.8,1441.7 L2465.8,1434.8" fill="none" stroke="#b18be0" stroke-width="2"/></svg>
<div class="t" style="left:608.6px;top:1542.5px;font-size:20.7px;font-weight:400;color:#707276;">Part Exchange_U15862-20250117_113456</div>
<div class="t" style="left:1267.8px;top:1543.6px;font-size:20.5px;font-weight:400;color:#707276;">Part Exchange</div>
<div class="t" style="left:1668.0px;top:1545.9px;font-size:20.5px;font-weight:400;color:#707276;">James Richards</div>
<div class="t" style="left:2181.4px;top:1544.5px;font-size:16.9px;font-weight:400;color:#707276;">17/01/2025 11:40:58</div>
<svg style="position:absolute;left:2355px;top:1533.5px" width="120" height="38" viewBox="2355 1420 120 38"><path d="M2366,1448.7 L2377.3,1437.4" stroke="#4d2188" stroke-width="5.6"/><path d="M2366.6,1448.1 L2376.8,1437.9" stroke="#b99be3" stroke-width="1.5"/><path d="M2364.6,1450.1 L2366.2,1448.5" stroke="#4d2188" stroke-width="4.6" stroke-linecap="round"/><path d="M2379,1435.7 L2381.3,1433.4" stroke="#4d2188" stroke-width="5.6" stroke-linecap="round"/><path d="M2403.6,1428.7 H2414.8 L2422.5,1436.4 V1451.6 Q2422.5,1453.6 2420.5,1453.6 H2403.6 Q2401.6,1453.6 2401.6,1451.6 V1430.7 Q2401.6,1428.7 2403.6,1428.7 Z" fill="#54228f"/><path d="M2406.6,1438.5 H2415.3 M2406.6,1441.7 H2414 M2406.6,1444.9 H2413" stroke="#c6b0ea" stroke-width="1.6"/><circle cx="2419.3" cy="1446" r="5.6" fill="#fff"/><circle cx="2419.3" cy="1446" r="3.7" fill="#fff" stroke="#7d6a98" stroke-width="1.8"/><path d="M2422.2,1448.9 L2426,1452.7" stroke="#5e4a80" stroke-width="2.3" stroke-linecap="round"/><rect x="2441.2" y="1431.4" width="25.2" height="19" rx="1.5" fill="#54228f"/><path d="M2441.8,1434.8 L2453.8,1441.7 L2465.8,1434.8" fill="none" stroke="#b18be0" stroke-width="2"/></svg>
<div class="t" style="left:608.6px;top:1577.7px;font-size:20.7px;font-weight:400;color:#707276;">Customer Order-U15678-202501117)113702</div>
<div class="t" style="left:1267.8px;top:1581.6px;font-size:20.5px;font-weight:400;color:#707276;">Customer Order</div>
<div class="t" style="left:1668.0px;top:1583.1px;font-size:20.5px;font-weight:400;color:#707276;">James Richards</div>
<div class="t" style="left:2181.4px;top:1582.9px;font-size:16.9px;font-weight:400;color:#707276;">17/01/2025 11:40:56</div>
<svg style="position:absolute;left:2355px;top:1571.5px" width="120" height="38" viewBox="2355 1420 120 38"><path d="M2366,1448.7 L2377.3,1437.4" stroke="#4d2188" stroke-width="5.6"/><path d="M2366.6,1448.1 L2376.8,1437.9" stroke="#b99be3" stroke-width="1.5"/><path d="M2364.6,1450.1 L2366.2,1448.5" stroke="#4d2188" stroke-width="4.6" stroke-linecap="round"/><path d="M2379,1435.7 L2381.3,1433.4" stroke="#4d2188" stroke-width="5.6" stroke-linecap="round"/><path d="M2403.6,1428.7 H2414.8 L2422.5,1436.4 V1451.6 Q2422.5,1453.6 2420.5,1453.6 H2403.6 Q2401.6,1453.6 2401.6,1451.6 V1430.7 Q2401.6,1428.7 2403.6,1428.7 Z" fill="#54228f"/><path d="M2406.6,1438.5 H2415.3 M2406.6,1441.7 H2414 M2406.6,1444.9 H2413" stroke="#c6b0ea" stroke-width="1.6"/><circle cx="2419.3" cy="1446" r="5.6" fill="#fff"/><circle cx="2419.3" cy="1446" r="3.7" fill="#fff" stroke="#7d6a98" stroke-width="1.8"/><path d="M2422.2,1448.9 L2426,1452.7" stroke="#5e4a80" stroke-width="2.3" stroke-linecap="round"/><rect x="2441.2" y="1431.4" width="25.2" height="19" rx="1.5" fill="#54228f"/><path d="M2441.8,1434.8 L2453.8,1441.7 L2465.8,1434.8" fill="none" stroke="#b18be0" stroke-width="2"/></svg>
<div style="position:absolute;left:2508.4px;top:1388.6px;width:5.6px;height:133.4px;background:#9a9a9c;border-radius:3px"></div>
<div style="position:absolute;left:2508.4px;top:1522px;width:5.6px;height:70px;background:#f4f4f4;border-radius:3px"></div>
</body></html>
